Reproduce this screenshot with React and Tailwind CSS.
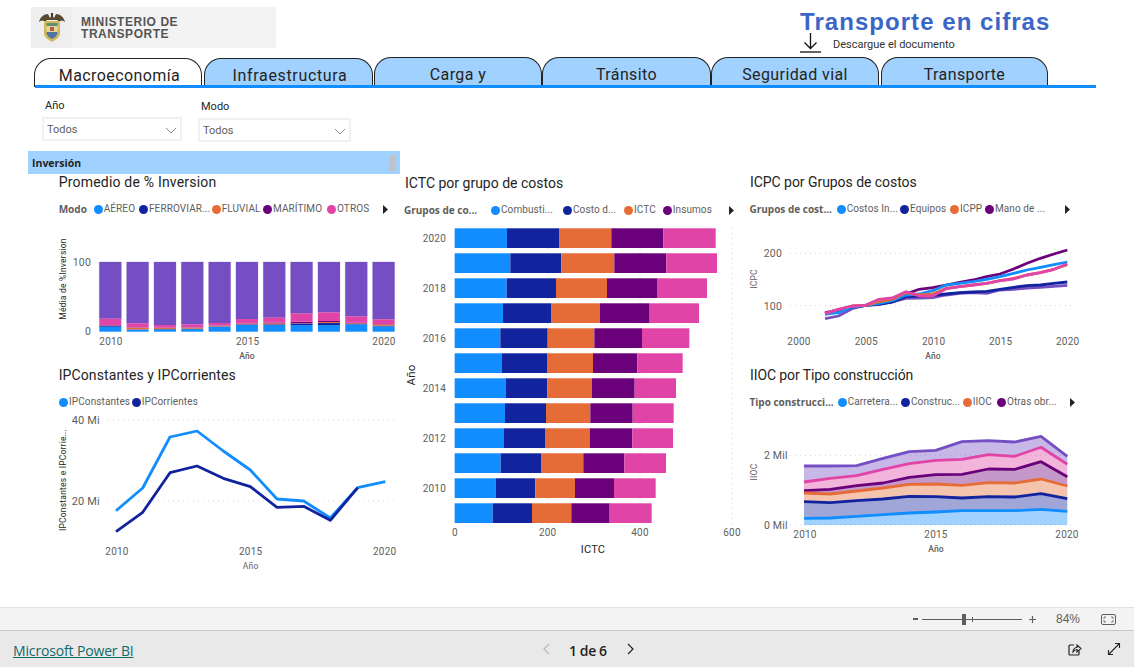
import React from "react";

const BLUE = "#118DFF", NAVY = "#12239E", ORANGE = "#E66C37", MAROON = "#6B007B", PINK = "#E044A7", PURPLE = "#744EC2";
const GRAY = "#605e5c";

function Dot({ color }) {
  return (
    <svg width="9" height="9" viewBox="0 0 9 9" className="shrink-0">
      <circle cx="4.5" cy="4.5" r="4.5" fill={color} />
    </svg>
  );
}

function Caret() {
  return (
    <svg width="5" height="9" viewBox="0 0 5 9" className="shrink-0">
      <path d="M0 0L5 4.5L0 9Z" fill="#252423" />
    </svg>
  );
}

function LegendItem({ color, text, className }) {
  return (
    <div className={`flex items-center gap-[1px] shrink-0 ${className}`}>
      <Dot color={color} />
      <span className="whitespace-nowrap tracking-[0.1px]">{text}</span>
    </div>
  );
}

function Legend({ className, label, labelClass, items }) {
  return (
    <div className={`flex items-center h-3 text-[10px] leading-3 text-[#605e5c] ${className}`}>
      {label && <span className={`font-['Open_Sans',sans-serif] font-bold whitespace-nowrap shrink-0 ${labelClass}`}>{label}</span>}
      {items.map((it) => (
        <LegendItem key={it.text} color={it.color} text={it.text} className={it.cls} />
      ))}
      {label && <Caret />}
    </div>
  );
}

function Title({ children, className }) {
  return <h2 className={`text-[14px] font-normal text-[#252423] whitespace-nowrap ${className}`}>{children}</h2>;
}

function T({ x, y, children, anchor = "middle", size = 10, weight = 400, fill = GRAY, rotate }) {
  return (
    <text
      x={x}
      y={y}
      textAnchor={anchor}
      dominantBaseline="central"
      fontSize={size}
      fontWeight={weight}
      fill={fill}
      fontFamily="Roboto, sans-serif"
      letterSpacing="0.2"
      transform={rotate ? `rotate(-90 ${x} ${y})` : undefined}
    >
      {children}
    </text>
  );
}

function Grid({ x1, x2, y }) {
  return <line x1={x1} x2={x2} y1={y} y2={y} stroke="#d4d4d4" strokeWidth="1" strokeDasharray="1 4" />;
}

/* ---------- Promedio ---------- */
const inv = [
  [15, 3, 1, 1, 19],
  [6, 1, 5, 1, 12],
  [7, 1, 3, 1, 8],
  [8, 1, 3, 1, 9],
  [15, 1, 2, 1, 7],
  [20, 2, 2, 1, 13],
  [20, 2, 3, 2, 15],
  [20, 4, 1, 5, 25],
  [20, 6, 3, 3, 26],
  [22, 1, 2, 2, 19],
  [16, 2, 4, 1, 14],
];
const invColors = [BLUE, NAVY, ORANGE, MAROON, PINK];

function InvChart() {
  return (
    <svg width="372" height="151" viewBox="28 214 372 151" className="block">
      {inv.map((row, i) => {
        const x = 99.3 + i * 27.33;
        let b = 331.7;
        const rects = row.map((v, j) => {
          const h = v / 3;
          b -= h;
          return <rect key={j} x={x} y={b} width="22" height={h} fill={invColors[j]} />;
        });
        return (
          <g key={i}>
            <rect x={x} y={262} width="22" height={b - 262} fill={PURPLE} stroke={PURPLE} strokeOpacity="0.25" />
            {rects}
          </g>
        );
      })}
      <T x={91} y={262} anchor="end" size={10.5}>100</T>
      <T x={91} y={331.5} anchor="end" size={10.5}>0</T>
      <T x={111} y={341.7}>2010</T>
      <T x={247.7} y={341.7}>2015</T>
      <T x={384} y={341.7}>2020</T>
      <T x={247} y={355.5} size={8.5} weight={500}>Año</T>
      <T x={63} y={279} size={8.5} rotate fill="#252423">Média de %Inversion</T>
    </svg>
  );
}

/* ---------- IPConstantes ---------- */
const pts = (arr, ox, oy) => arr.map(([x, y]) => `${(x / 3 + ox).toFixed(1)},${(y / 3 + oy).toFixed(1)}`).join(" ");
const ipc = [[288,437],[368,369],[450,216],[531,198],[610,258],[691,315],[771,402],[851,408],[931,459],[1013,368],[1096,350]];
const ipk = [[288,500],[368,442],[450,323],[531,303],[610,340],[691,365],[771,427],[851,424],[931,466],[1013,368]];

function IPChart() {
  return (
    <svg width="372" height="167" viewBox="28 408 372 167" className="block">
      <Grid x1={108} x2={395} y={420} />
      <Grid x1={108} x2={395} y={501} />
      <polyline points={pts(ipc, 20, 365)} fill="none" stroke={BLUE} strokeWidth="2.8" strokeLinejoin="round" />
      <polyline points={pts(ipk, 20, 365)} fill="none" stroke={NAVY} strokeWidth="2.8" strokeLinejoin="round" />
      <T x={100} y={420.5} anchor="end" size={11}>40 Mi</T>
      <T x={100} y={501.5} anchor="end" size={11}>20 Mi</T>
      <T x={117} y={551.7}>2010</T>
      <T x={250.7} y={551.7}>2015</T>
      <T x={384.7} y={551.7}>2020</T>
      <T x={250.7} y={566} size={8.5}>Año</T>
      <T x={63} y={480} size={8.5} rotate fill="#252423">IPConstantes e IPCorrie...</T>
    </svg>
  );
}

/* ---------- ICTC ---------- */
const ictc = [
  [321,477,634,790,947],
  [331,484,643,799,951],
  [320,468,621,771,921],
  [309,453,600,749,897],
  [301,443,583,726,868],
  [306,441,579,712,848],
  [317,442,576,704,828],
  [315,438,571,698,821],
  [312,435,569,697,819],
  [302,423,550,673,798],
  [287,406,525,642,767],
  [278,396,514,629,755],
];

function ICTCChart() {
  return (
    <svg width="345" height="349" viewBox="400 216 345 349" className="block">
      {[547.7, 640, 732].map((x) => (
        <line key={x} x1={x} x2={x} y1={228} y2={526} stroke="#d4d4d4" strokeDasharray="1 4" />
      ))}
      {ictc.map((row, i) => {
        const y = 228.3 + i * 25;
        let prev = 164;
        return row.map((z, j) => {
          const x = 400 + prev / 3;
          const w = (z - prev) / 3;
          prev = z;
          return <rect key={`${i}-${j}`} x={x} y={y} width={w} height="19.7" fill={invColors[j]} />;
        });
      })}
      {["2020", "2018", "2016", "2014", "2012", "2010"].map((l, i) => (
        <T key={l} x={446} y={238 + i * 50.1} anchor="end">{l}</T>
      ))}
      <T x={411} y={375} size={11.5} rotate fill="#252423">Año</T>
      <T x={455} y={532.7}>0</T>
      <T x={547.7} y={532.7}>200</T>
      <T x={640} y={532.7}>400</T>
      <T x={732} y={532.7}>600</T>
      <T x={593} y={549} size={11} fill="#252423">ICTC</T>
    </svg>
  );
}

/* ---------- ICPC ---------- */
const icpc = [
  [PURPLE, [446,438,416,406,404,396,385,384,383,375,370,368,370,360,358,354,352,349,346]],
  [NAVY, [432,425,412,406,402,396,380,378,376,372,368,366,364,358,352,347,345,340,336]],
  [MAROON, [428,420,410,406,398,390,372,358,353,345,337,330,320,312,297,280,265,252,240]],
  [BLUE, [432,428,412,406,400,392,375,372,362,345,340,335,328,320,310,300,292,284,276]],
  [ORANGE, [430,418,408,406,395,388,368,375,372,355,350,345,340,332,325,315,308,298,284]],
  [PINK, [430,418,408,406,388,384,365,378,378,356,350,345,340,332,327,315,308,298,282]],
];

function ICPCChart() {
  return (
    <svg width="389" height="151" viewBox="745 214 389 151" className="block">
      <Grid x1={790} x2={1075} y={253.3} />
      <Grid x1={790} x2={1075} y={305.7} />
      {icpc.map(([c, ys]) => (
        <polyline
          key={c}
          points={pts(ys.map((y, i) => [255 + i * 40.39, y]), 740, 170)}
          fill="none"
          stroke={c}
          strokeWidth="2.8"
          strokeLinejoin="round"
        />
      ))}
      <T x={782} y={253.5} anchor="end" size={10.5}>200</T>
      <T x={782} y={306} anchor="end" size={10.5}>100</T>
      {[["2000", 799], ["2005", 866.3], ["2010", 933.7], ["2015", 1000.7], ["2020", 1067.7]].map(([l, x]) => (
        <T key={l} x={x} y={341.7}>{l}</T>
      ))}
      <T x={933} y={356} size={8.5} weight={500}>Año</T>
      <T x={754} y={279} size={8.5} rotate>ICPC</T>
    </svg>
  );
}

/* ---------- IIOC ---------- */
const iioc = [
  [PURPLE, [303,303,302,280,260,256,230,227,231,214,274]],
  [PINK, [351,340,332,313,296,286,283,269,274,247,298]],
  [MAROON, [377,373,362,354,337,329,328,312,313,290,335]],
  [ORANGE, [384,387,378,369,358,357,361,353,354,342,363]],
  [NAVY, [410,413,407,402,394,395,399,395,396,386,401]],
  [BLUE, [460,459,454,449,444,441,437,437,437,433,439]],
];

function IIOCChart() {
  const xy = (ys) => ys.map((y, i) => [192 + i * 79, y]);
  return (
    <svg width="389" height="157" viewBox="745 408 389 157" className="block">
      <Grid x1={790} x2={1075} y={455.3} />
      <Grid x1={790} x2={1075} y={525} />
      {iioc.map(([c, ys], k) => {
        const lower = k < iioc.length - 1 ? iioc[k + 1][1] : ys.map(() => 480);
        const poly = [...xy(ys), ...xy(lower).reverse()];
        return <polygon key={c} points={pts(poly, 740, 365)} fill={c} fillOpacity="0.4" />;
      })}
      {iioc.map(([c, ys]) => (
        <polyline key={c} points={pts(xy(ys), 740, 365)} fill="none" stroke={c} strokeWidth="2.8" strokeLinejoin="round" />
      ))}
      <T x={787.7} y={455.5} anchor="end" size={10.5}>2 Mil</T>
      <T x={787.7} y={525} anchor="end" size={10.5}>0 Mil</T>
      <T x={805} y={534}>2010</T>
      <T x={936} y={534}>2015</T>
      <T x={1067} y={534}>2020</T>
      <T x={936} y={549} size={8.5} weight={500}>Año</T>
      <T x={754} y={472} size={8.5} rotate>IIOC</T>
    </svg>
  );
}

/* ---------- Header bits ---------- */
function Emblem() {
  return (
    <svg width="28" height="30" viewBox="0 0 28 30" className="shrink-0">
      <path d="M1 9C2 4 6 1 10 1L12 5L14 2L16 5L18 1C22 1 26 4 27 9C25 7 23 7 21 9L19 7H9L7 9C5 7 3 7 1 9Z" fill="#5a4a34" />
      <path d="M13 0h2v4h-2z" fill="#3c3a2c" />
      <path d="M6 8H22V20C22 25 17 27 14 29C11 27 6 25 6 20Z" fill="#d3b95c" />
      <path d="M8.5 10H19.5V13H8.5Z" fill="#5f8f72" />
      <path d="M8.5 13H19.5V19H8.5Z" fill="#e4d79a" />
      <path d="M8.5 19H19.5C19.5 23 16 25 14 26C12 25 8.5 23 8.5 19Z" fill="#4d76a0" />
      <path d="M12 14h4v4h-4z" fill="#b35a4a" />
    </svg>
  );
}

const tabs = [
  { t: "Macroeconomía", cls: "w-[168px] h-[29px] bg-white ml-[34px] mr-[2px] pt-[6px] pl-[3px] tracking-[0.4px]" },
  { t: "Infraestructura", cls: "w-[169px] h-[29px] bg-[#a0d1ff] mr-[1px] pt-[6px] pl-[3px] tracking-[0.65px]" },
  { t: "Carga y", cls: "w-[168px] h-[30px] bg-[#a0d1ff] pt-[5px] tracking-[0.4px]" },
  { t: "Tránsito", cls: "w-[169px] h-[30px] bg-[#a0d1ff] pt-[5px] tracking-[0.4px]" },
  { t: "Seguridad vial", cls: "w-[168px] h-[30px] bg-[#a0d1ff] mr-[2px] pt-[5px] tracking-[0.4px]" },
  { t: "Transporte", cls: "w-[167px] h-[30px] bg-[#a0d1ff] pt-[5px] tracking-[0.4px]" },
];

function Select({ cls }) {
  return (
    <div className={`flex items-center justify-between border-2 border-[#f1f1f1] pl-[3px] pt-[3px] pr-[3px] text-[11px] text-[#605e5c] h-[24px] ${cls}`}>
      <span>Todos</span>
      <svg width="12" height="7" viewBox="0 0 12 7">
        <path d="M1 1L6 6L11 1" fill="none" stroke="#8a8886" strokeWidth="1" />
      </svg>
    </div>
  );
}

export default function App() {
  return (
    <div className="w-[1134px] h-[667px] overflow-hidden bg-white flex flex-col font-['Roboto',sans-serif] text-[#252423]">
      <main className="h-[607px] flex flex-col">
        {/* header */}
        <header className="h-[56px] flex items-start">
          <div className="ml-[31px] mt-[7px] w-[245px] h-[41px] bg-[#f3f3f3] flex items-center shrink-0">
            <div className="w-[41px] h-[41px] bg-[#eeeeee] flex items-center justify-center">
              <Emblem />
            </div>
            <div className="ml-[9px] font-['Liberation_Sans',sans-serif] font-bold text-[12px] leading-[12.5px] tracking-[0.55px] text-[#555555] pt-[1px]">
              <div>MINISTERIO DE</div>
              <div>TRANSPORTE</div>
            </div>
          </div>
          <div className="ml-[524px] mt-[9px] shrink-0">
            <div className="font-['Liberation_Sans',sans-serif] font-bold text-[24px] leading-[26px] tracking-[1.05px] text-[#3a66c8] whitespace-nowrap">
              Transporte en cifras
            </div>
            <div className="flex items-start mt-[-2px]">
              <svg width="21" height="20" viewBox="0 0 21 20" className="shrink-0">
                <path d="M10.5 0V15M4.5 9.5L10.5 15.5L16.5 9.5" fill="none" stroke="#111" strokeWidth="1.3" />
                <path d="M0 19H21" stroke="#111" strokeWidth="1.3" />
              </svg>
              <span className="ml-[12px] mt-[5px] text-[11px] leading-[14px] text-[#333] whitespace-nowrap">Descargue el documento</span>
            </div>
          </div>
        </header>

        {/* tabs */}
        <nav className="h-[31px] relative flex items-end">
          {tabs.map((t) => (
            <div
              key={t.t}
              className={`${t.cls} shrink-0 border border-b-0 border-[#252423] rounded-t-[17px] flex items-center justify-center text-[16px] text-[#252423]`}
            >
              {t.t}
            </div>
          ))}
          <div className="absolute left-[35px] top-[29px] w-[1061px] h-[2.5px] bg-[#118DFF]" />
        </nav>

        {/* filters */}
        <div className="h-[64px] flex items-start">
          <div className="ml-[42px] mt-[12px] w-[140px]">
            <div className="pl-[3px] h-[14px] text-[11px] leading-[14px] text-[#252423]">Año</div>
            <Select cls="mt-[4px] w-[140px]" />
          </div>
          <div className="ml-[16px] mt-[13px] w-[153px]">
            <div className="pl-[3px] h-[14px] text-[11px] leading-[14px] text-[#252423]">Modo</div>
            <Select cls="mt-[4px] w-[153px]" />
          </div>
        </div>

        {/* section bar */}
        <div className="ml-[28px] w-[372px] h-[23px] bg-[#a0d1ff] flex items-center justify-between pl-[4px] pr-[4px] shrink-0">
          <span className="font-['Open_Sans',sans-serif] pt-[2px] text-[10.5px] font-bold text-[#252423]">Inversión</span>
          <span className="w-[7px] h-[16px] bg-[#c0c4c8]" />
        </div>

        {/* charts */}
        <div className="flex ml-[28px] h-[410px]">
          <div className="w-[372px] shrink-0">
            <section className="h-[191px]">
              <Title className="pl-[30.7px] leading-4 h-4 tracking-[0.2px]">Promedio de % Inversion</Title>
              <Legend
                className="mt-[13px] mb-[-1px] pl-[30.7px]"
                label="Modo"
                labelClass="w-[35px]"
                items={[
                  { color: BLUE, text: "AÉREO", cls: "w-[45.3px]" },
                  { color: NAVY, text: "FERROVIAR...", cls: "w-[72.7px]" },
                  { color: ORANGE, text: "FLUVIAL", cls: "w-[51.3px]" },
                  { color: MAROON, text: "MARÍTIMO", cls: "w-[64px]" },
                  { color: PINK, text: "OTROS", cls: "w-[56px]" },
                ]}
              />
              <InvChart />
            </section>
            <section>
              <Title className="pl-[30.7px] leading-5 h-5 tracking-[0.1px]">IPConstantes y IPCorrientes</Title>
              <Legend
                className="mt-[11px] pl-[31px]"
                items={[
                  { color: BLUE, text: "IPConstantes", cls: "w-[72.7px]" },
                  { color: NAVY, text: "IPCorrientes", cls: "w-[72px]" },
                ]}
              />
              <IPChart />
            </section>
          </div>
          <div className="w-[345px] shrink-0">
            <section>
              <Title className="pl-[5px] leading-[19px] h-[19px]">ICTC por grupo de costos</Title>
              <Legend
                className="mt-[11px] pl-[4px]"
                label="Grupos de co..."
                labelClass="w-[87px]"
                items={[
                  { color: BLUE, text: "Combusti...", cls: "w-[72px]" },
                  { color: NAVY, text: "Costo d...", cls: "w-[61px]" },
                  { color: ORANGE, text: "ICTC", cls: "w-[38.7px]" },
                  { color: MAROON, text: "Insumos", cls: "w-[66.3px]" },
                ]}
              />
              <ICTCChart />
            </section>
          </div>
          <div className="w-[389px] shrink-0">
            <section className="h-[191px]">
              <Title className="pl-[5px] leading-4 h-4 tracking-[-0.05px]">ICPC por Grupos de costos</Title>
              <Legend
                className="mt-[13px] mb-[-1px] pl-[4.5px]"
                label="Grupos de cost..."
                labelClass="w-[87.2px]"
                items={[
                  { color: BLUE, text: "Costos In...", cls: "w-[63.3px]" },
                  { color: NAVY, text: "Equipos", cls: "w-[50px]" },
                  { color: ORANGE, text: "ICPP", cls: "w-[35px]" },
                  { color: MAROON, text: "Mano de ...", cls: "w-[80px]" },
                ]}
              />
              <ICPCChart />
            </section>
            <section>
              <Title className="pl-[5px] leading-5 h-5 tracking-[-0.1px]">IIOC por Tipo construcción</Title>
              <Legend
                className="mt-[11px] pl-[4.5px]"
                label="Tipo construcci..."
                labelClass="w-[88.2px]"
                items={[
                  { color: BLUE, text: "Carretera...", cls: "w-[63.3px]" },
                  { color: NAVY, text: "Construc...", cls: "w-[61.7px]" },
                  { color: ORANGE, text: "IIOC", cls: "w-[34.3px]" },
                  { color: MAROON, text: "Otras obr...", cls: "w-[73px]" },
                ]}
              />
              <IIOCChart />
            </section>
          </div>
        </div>
      </main>

      {/* zoom bar */}
      <div className="h-[24px] shrink-0 bg-[#f3f3f3] border-t border-b border-t-[#e0e0e0] border-b-[#c8c8c8] flex items-center font-['Liberation_Sans',sans-serif] text-[#605e5c]">
        <span className="ml-[913px] w-[5px] h-[2px] bg-[#605e5c]" />
        <div className="ml-[4px] w-[100px] h-[1px] bg-[#605e5c] relative">
          <span className="absolute left-[40px] top-[-5px] w-[4px] h-[11px] bg-[#605e5c]" />
          <span className="absolute left-[50px] top-[-2px] w-[1px] h-[5px] bg-[#605e5c]" />
        </div>
        <svg width="9" height="9" viewBox="0 0 9 9" className="ml-[6px]">
          <path d="M4.5 1V8M1 4.5H8" stroke="#605e5c" strokeWidth="1.2" />
        </svg>
        <span className="ml-[19px] w-[23px] text-[12px] whitespace-nowrap">84%</span>
        <svg width="15" height="11" viewBox="0 0 15 11" className="ml-[22px]">
          <rect x="0.5" y="0.5" width="14" height="10" rx="1.5" fill="none" stroke="#605e5c" />
          <path d="M3 5V3H5M10 3H12V5M3 6V8H5M10 8H12V6" fill="none" stroke="#605e5c" strokeWidth="0.8" />
        </svg>
      </div>

      {/* footer */}
      <footer className="flex-1 bg-[#e9e9e9] flex items-center font-['Open_Sans',sans-serif]">
        <a className="ml-[13px] w-[120px] pt-[3px] text-[14px] tracking-[-0.15px] text-[#0f6b6b] underline whitespace-nowrap">Microsoft Power BI</a>
        <svg width="8" height="12" viewBox="0 0 8 12" className="ml-[409px]">
          <path d="M7 1L2 6L7 11" fill="none" stroke="#b8b8b8" strokeWidth="1.2" />
        </svg>
        <span className="ml-[19px] w-[38px] pt-[2px] text-[14px] font-semibold text-[#252423] whitespace-nowrap tracking-[-0.4px]">1 de 6</span>
        <svg width="8" height="12" viewBox="0 0 8 12" className="ml-[20px]">
          <path d="M1 1L6 6L1 11" fill="none" stroke="#252423" strokeWidth="1.2" />
        </svg>
        <svg width="14" height="13" viewBox="0 0 14 13" className="ml-[433px]">
          <path d="M6 2H2C1 2 1 3 1 3V11C1 12 2 12 2 12H10C11 12 11 11 11 11V8" fill="none" stroke="#252423" strokeWidth="1.2" />
          <path d="M5 9C5 6 7 4.500 9 4.500V2L13 5.500L9 9V6.500C7.500 6.500 6 7.500 5 9Z" fill="none" stroke="#252423" strokeWidth="1.1" />
        </svg>
        <svg width="14" height="14" viewBox="0 0 14 14" className="ml-[25px]">
          <path d="M1.500 8V12.500H6M8 1.500H12.500V6M1.500 12.500L12.500 1.500" fill="none" stroke="#252423" strokeWidth="1.1" />
        </svg>
      </footer>
    </div>
  );
}
